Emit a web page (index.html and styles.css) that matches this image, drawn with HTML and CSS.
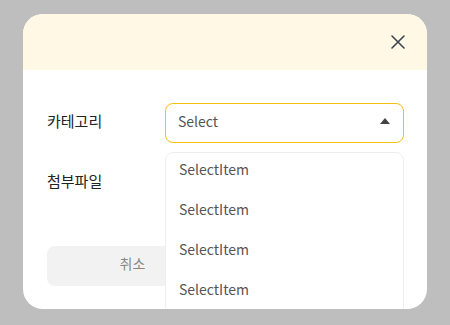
FILE: index.html
```html
<!DOCTYPE html>
<html lang="ko">
<head>
  <meta charset="UTF-8">
  <meta name="viewport" content="width=device-width, initial-scale=1.0">
  <title>파일 등록</title>
  <link rel="stylesheet" href="styles.css">
</head>
<body>
  <div class="modal">
    <div class="modal-header">
      <button class="close-button" aria-label="닫기">
        <svg width="16" height="16" viewBox="0 0 16 16">
          <path d="M2 2 L14 14 M14 2 L2 14" stroke="#3d4450" stroke-width="1.6" stroke-linecap="round"/>
        </svg>
      </button>
    </div>
    <div class="modal-body">
      <div class="form-row">
        <label class="form-label">카테고리</label>
        <div class="select-wrap">
          <div class="select open">
            <span>Select</span>
            <span class="caret"></span>
          </div>
          <ul class="select-list">
            <li>SelectItem</li>
            <li>SelectItem</li>
            <li>SelectItem</li>
            <li>SelectItem</li>
          </ul>
        </div>
      </div>
      <div class="form-row">
        <label class="form-label">첨부파일</label>
        <div class="file-box"></div>
      </div>
      <div class="button-row">
        <button class="btn btn-cancel">취소</button>
        <button class="btn btn-confirm">확인</button>
      </div>
    </div>
  </div>
</body>
</html>
```

FILE: styles.css
```css
body {
  margin: 0;
  height: 100vh;
  background-color: #bebebe;
  font-family: "Noto Sans CJK KR", "Noto Sans", sans-serif;
  padding: 14px 0 0 23px;
  box-sizing: border-box;
}

.modal {
  width: 404px;
  height: 295px;
  background-color: #fff;
  border-radius: 20px;
  overflow: hidden;
  display: flex;
  flex-direction: column;
}

.modal-header {
  height: 56px;
  background-color: #fff8e4;
  display: flex;
  justify-content: flex-end;
  align-items: center;
  padding: 0 21px;
}

.close-button {
  border: none;
  background: none;
  padding: 0;
  width: 16px;
  height: 16px;
  cursor: pointer;
}

.close-button svg {
  display: block;
}

.modal-body {
  padding: 33px 23px 0 24px;
  display: flex;
  flex-direction: column;
}

.form-row {
  display: flex;
  align-items: center;
  height: 40px;
  margin-bottom: 20px;
}

.form-label {
  width: 118px;
  padding-bottom: 6px;
  font-size: 15px;
  color: #222;
}

.select-wrap {
  flex: 1;
  position: relative;
}

.select {
  height: 40px;
  box-sizing: border-box;
  border: 1px solid #f5c010;
  border-radius: 8px;
  display: flex;
  align-items: center;
  justify-content: space-between;
  padding: 0 13px 5px 12px;
  font-size: 14px;
  color: #555;
}

.caret {
  width: 0;
  height: 0;
  border-left: 5px solid transparent;
  border-right: 5px solid transparent;
  border-bottom: 6px solid #444;
}

.select-list {
  position: absolute;
  top: 49px;
  left: 0;
  right: 0;
  margin: 0;
  padding: 0;
  list-style: none;
  background-color: #fff;
  border: 1px solid #eee;
  border-radius: 8px;
  z-index: 2;
}

.select-list li {
  height: 40px;
  line-height: 32px;
  padding: 0 13px;
  font-size: 14px;
  color: #555;
}

.file-box {
  flex: 1;
}

.button-row {
  display: flex;
  gap: 15px;
  margin-top: 23px;
}

.btn {
  flex: 1;
  height: 40px;
  border: none;
  border-radius: 8px;
  padding-bottom: 7px;
  font-family: inherit;
  font-size: 14px;
  cursor: pointer;
}

.btn-cancel {
  background-color: #f2f2f2;
  color: #888;
}

.btn-confirm {
  background-color: #f5c010;
  color: #fff;
}
```
